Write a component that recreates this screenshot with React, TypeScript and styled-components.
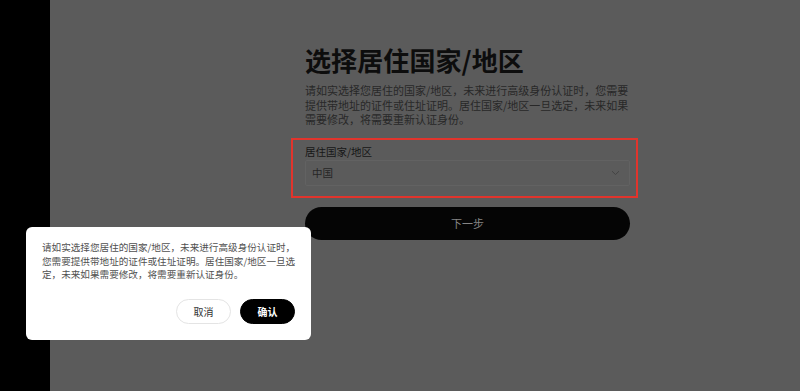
import { FC } from "react";
import styled, { createGlobalStyle } from "styled-components";

const GlobalStyle = createGlobalStyle`
  * { box-sizing: border-box; }
  html, body { margin: 0; padding: 0; }
  body {
    font-family: "Noto Sans CJK SC", "Noto Sans", sans-serif;
    background: #5b5b5b;
  }
`;

const Page = styled.div`
  display: flex;
  width: 800px;
  height: 391px;
  overflow: hidden;
  position: relative;
`;

const SideStrip = styled.div`
  width: 50px;
  flex-shrink: 0;
  background: #000;
`;

const Main = styled.main`
  flex: 1;
  background: #5b5b5b;
  padding: 44px 0 0 255px;
`;

const Column = styled.div`
  width: 325px;
  display: flex;
  flex-direction: column;
`;

const Title = styled.h1`
  margin: 0;
  font-size: 26px;
  line-height: 32px;
  font-weight: 700;
  color: #0d0d0d;
  letter-spacing: 0.1px;
`;

const Intro = styled.p`
  margin: 7px 0 0;
  width: 328px;
  font-size: 11px;
  line-height: 14.5px;
  color: #282828;
`;

const Marked = styled.div`
  margin: 11px -8px 0 -14px;
  border: 2px solid #e1342c;
  padding: 5px 6px 10px 12px;
`;

const FieldLabel = styled.label`
  display: block;
  font-size: 10.5px;
  line-height: 14px;
  color: #161616;
`;

const Select = styled.div`
  margin-top: 1px;
  height: 26px;
  border: 1px solid #626262;
  border-radius: 2px;
  display: flex;
  align-items: center;
  justify-content: space-between;
  padding: 0 9px 0 6px;
  font-size: 10.5px;
  color: #262626;
`;

const NextButton = styled.button`
  margin-top: 9px;
  height: 33px;
  border: none;
  border-radius: 17px;
  background: #050505;
  color: #858585;
  font-family: inherit;
  font-size: 11px;
`;

const Dialog = styled.div`
  position: absolute;
  left: 26px;
  top: 227px;
  width: 285px;
  height: 113px;
  background: #fff;
  border-radius: 6px;
  padding: 14px 14px 16px 16px;
  display: flex;
  flex-direction: column;
`;

const DialogText = styled.p`
  margin: 0;
  width: 257px;
  font-size: 9.6px;
  line-height: 13.5px;
  color: #505050;
`;

const Actions = styled.div`
  margin-top: auto;
  display: flex;
  justify-content: flex-end;
  gap: 9px;
  padding-right: 2px;
`;

const ActionButton = styled.button<{ $primary?: boolean }>`
  width: 55px;
  height: 25px;
  border-radius: 13px;
  font-family: inherit;
  font-size: 10px;
  font-weight: ${(p) => (p.$primary ? 700 : 400)};
  border: 1px solid ${(p) => (p.$primary ? "#000" : "#e4e4e4")};
  background: ${(p) => (p.$primary ? "#000" : "#fff")};
  color: ${(p) => (p.$primary ? "#fff" : "#333")};
`;

const Chevron: FC = () => (
  <svg width="9" height="6" viewBox="0 0 9 6">
    <path d="M1 1.2 L4.5 4.5 L8 1.2" fill="none" stroke="#444" strokeWidth="1" />
  </svg>
);

const App: FC = () => {
  return (
    <>
      <GlobalStyle />
      <Page>
        <SideStrip />
        <Main>
          <Column>
            <Title>选择居住国家/地区</Title>
            <Intro>
              请如实选择您居住的国家/地区，未来进行高级身份认证时，您需要提供带地址的证件或住址证明。居住国家/地区一旦选定，未来如果需要修改，将需要重新认证身份。
            </Intro>
            <Marked>
              <FieldLabel>居住国家/地区</FieldLabel>
              <Select>
                <span>中国</span>
                <Chevron />
              </Select>
            </Marked>
            <NextButton>下一步</NextButton>
          </Column>
        </Main>
        <Dialog>
          <DialogText>
            请如实选择您居住的国家/地区，未来进行高级身份认证时，您需要提供带地址的证件或住址证明。居住国家/地区一旦选定，未来如果需要修改，将需要重新认证身份。
          </DialogText>
          <Actions>
            <ActionButton>取消</ActionButton>
            <ActionButton $primary>确认</ActionButton>
          </Actions>
        </Dialog>
      </Page>
    </>
  );
};

export default App;
